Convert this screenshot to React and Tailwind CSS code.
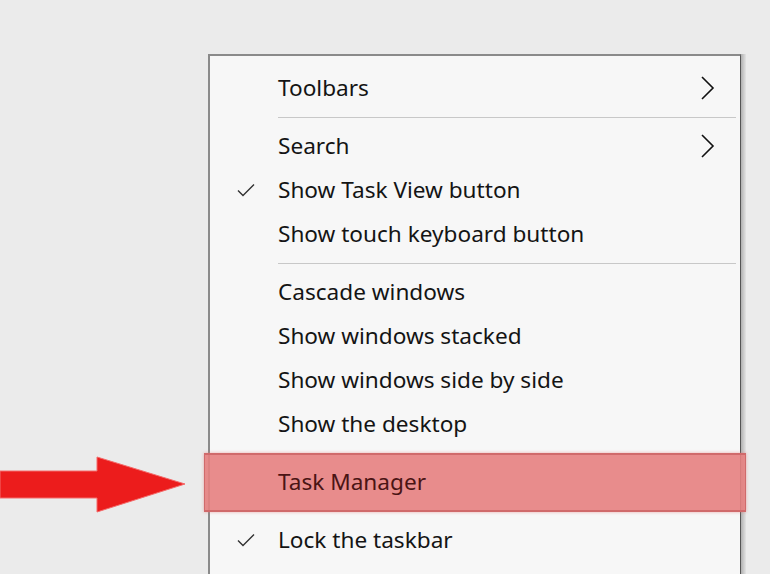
import React from "react";

const items = [
  { label: "Toolbars", sub: true },
  { sep: true },
  { label: "Search", sub: true },
  { label: "Show Task View button", checked: true },
  { label: "Show touch keyboard button" },
  { sep: true },
  { label: "Cascade windows" },
  { label: "Show windows stacked" },
  { label: "Show windows side by side" },
  { label: "Show the desktop" },
  { sep: true, hidden: true },
  { label: "Task Manager", highlight: true },
  { sep: true, hidden: true },
  { label: "Lock the taskbar", checked: true },
];

const Check = () => (
  <svg width="20" height="16" viewBox="0 0 20 16" fill="none">
    <path d="M2 8.5 L7 13.5 L18 2.5" stroke="#333" strokeWidth="1.4" />
  </svg>
);

const Chevron = () => (
  <svg width="16" height="26" viewBox="0 0 16 26" fill="none">
    <path d="M2 2 L13 13 L2 24" stroke="#111" strokeWidth="1.6" />
  </svg>
);

const MenuRow = ({ item }) => {
  if (item.sep) {
    return (
      <div className="h-[14px] flex items-center pl-[68px] pr-[4px]">
        {!item.hidden && <div className="h-px w-full bg-[#c8c8c8]" />}
      </div>
    );
  }
  return (
    <div className="relative h-[44px] flex items-center">
      {item.highlight && (
        <div className="absolute left-[-6px] right-[-6px] top-[-7px] bottom-[-8px] bg-[#e57f80]/90 border-y-2 border-x border-[#d06a6b] shadow-[0_0_3px_rgba(230,120,120,0.6)]" />
      )}
      <div className="relative w-[68px] flex justify-center pl-[3px]">
        {item.checked && <Check />}
      </div>
      <span
        className={`relative flex-1 text-[22.6px] leading-none ${
          item.highlight ? "text-[#4a1414]" : "text-[#141414]"
        }`}
      >
        {item.label}
      </span>
      <div className="relative w-[40px] flex justify-start">
        {item.sub && <Chevron />}
      </div>
    </div>
  );
};

export default function App() {
  return (
    <div
      className="relative w-[770px] h-[574px] overflow-hidden bg-[#ebebeb]"
      style={{ fontFamily: '"Noto Sans", "Open Sans", sans-serif' }}
    >
      <div className="pt-[54px] pl-[208px]">
        <div className="w-[538px] h-[560px] flex">
          <div className="w-[533px] bg-[#f7f7f7] border-l-2 border-t-2 border-[#8a8a8a] border-r border-r-[#555] pt-[10px]">
            {items.map((item, i) => (
              <MenuRow key={i} item={item} />
            ))}
          </div>
          <div className="w-[5px] bg-gradient-to-r from-[#b0b0b0] to-[#e4e4e4]" />
        </div>
      </div>
      <svg
        className="absolute left-0 top-[455px]"
        width="190"
        height="60"
        viewBox="0 0 190 60"
      >
        <path
          d="M0 16 L97 16 L97 2 L185 29 L97 57 L97 43 L0 43 Z"
          fill="#ec1c1c"
          stroke="#f46a6a"
          strokeWidth="1"
        />
      </svg>
    </div>
  );
}
